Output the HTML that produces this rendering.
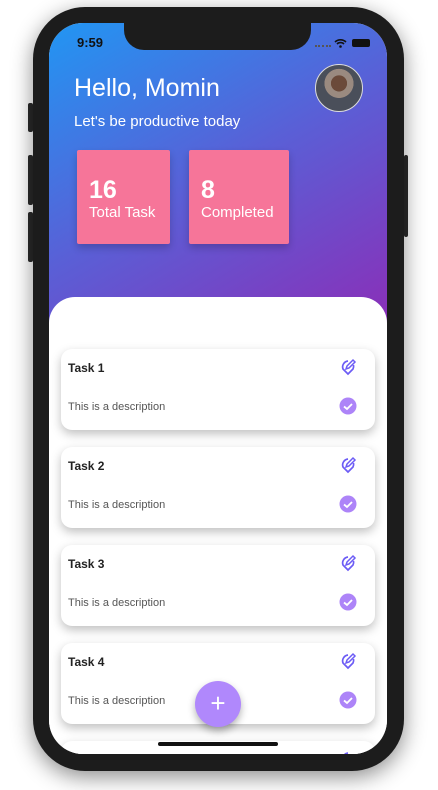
<!DOCTYPE html>
<html><head><meta charset="utf-8"><style>
*{margin:0;padding:0;box-sizing:border-box}
body{width:438px;height:790px;background:#fff;position:relative;overflow:hidden;font-family:"Liberation Sans",sans-serif}
.abs{position:absolute}
.phone{left:33px;top:7px;width:371px;height:764px;background:#1c1c1c;border-radius:52px;box-shadow:0 6px 22px rgba(0,0,0,.45)}
.btn{background:#2a2a2a;border-radius:2px}
.screen{left:49px;top:23px;width:338px;height:731px;border-radius:34px;overflow:hidden;background:#fff}
.grad{left:0;top:0;width:338px;height:300px;background:linear-gradient(150deg,#2196f3 0%,#5a5fd6 50%,#8a2fb8 100%)}
.notch{left:75px;top:0;width:187px;height:27px;background:#1c1c1c;border-radius:0 0 20px 20px}
.sheet{left:0;top:274px;width:338px;height:470px;background:#fff;border-radius:26px 26px 0 0}
.stat{background:#f67599;box-shadow:0 4px 8px rgba(0,0,0,.2);border-radius:2px;color:#fff}
.stat b{position:absolute;left:12px;top:26px;font-size:25px;font-weight:bold}
.stat span{position:absolute;left:12px;top:54px;font-size:15px}
.card{left:12px;width:314px;height:81px;background:#fff;border-radius:11px;box-shadow:0 4px 10px rgba(0,0,0,.25)}
.card .t{position:absolute;left:7px;top:12px;font-size:12px;font-weight:bold;color:#222}
.card .d{position:absolute;left:7px;top:52px;font-size:11px;color:#555}
.card svg{position:absolute}
</style></head><body>
<div class="abs btn" style="left:28px;top:103px;width:5px;height:29px"></div>
<div class="abs btn" style="left:28px;top:155px;width:5px;height:50px"></div>
<div class="abs btn" style="left:28px;top:212px;width:5px;height:50px"></div>
<div class="abs btn" style="left:404px;top:155px;width:4px;height:82px"></div>
<div class="abs phone"></div>
<div class="abs screen">
  <div class="abs grad"></div>
  <div class="abs notch"></div>
  <div class="abs" style="left:28px;top:12px;font-size:13px;font-weight:bold;color:#111">9:59</div>
  <div class="abs" style="left:266px;top:22px;width:16px;height:2px;border-top:2px dotted #555"></div>
  <svg class="abs" style="left:285px;top:15px" width="13" height="10" viewBox="0 0 13 10"><path d="M1 4a8 8 0 0 1 11 0M3 6a5 5 0 0 1 7 0" stroke="#111" stroke-width="1.6" fill="none"/><circle cx="6.5" cy="8.5" r="1.3" fill="#111"/></svg>
  <div class="abs" style="left:303px;top:16px;width:18px;height:8px;background:#111;border-radius:2px"></div>
  <div class="abs" style="left:25px;top:51px;font-size:25px;color:#fff">Hello, Momin</div>
  <div class="abs" style="left:25px;top:90px;font-size:15px;color:#fff">Let's be productive today</div>
  <div class="abs" style="left:266px;top:41px;width:48px;height:48px;border-radius:50%;background:radial-gradient(circle at 50% 40%,#6b4a3a 0 22%,#9a8a80 23% 40%,#4a4f5a 41%);border:1px solid #ddd"></div>
  <div class="abs stat" style="left:28px;top:127px;width:93px;height:94px"><b>16</b><span>Total Task</span></div>
  <div class="abs stat" style="left:140px;top:127px;width:100px;height:94px"><b>8</b><span>Completed</span></div>
  <div class="abs sheet"></div>
  <div id="cards"></div>
  <div class="abs card" style="top:326px"><div class="t">Task 1</div><div class="d">This is a description</div>
  <svg style="left:278px;top:9px" width="18" height="18" viewBox="0 0 18 18"><path d="M9 3a6 6 0 0 0-5 8l5 5 5-5a6 6 0 0 0 .5-4" stroke="#6c5cf5" stroke-width="1.7" fill="none"/><path d="M7 11l1-3 6-6 2 2-6 6z" stroke="#6c5cf5" stroke-width="1.5" fill="none"/></svg>
  <svg style="left:278px;top:48px" width="18" height="18"><circle cx="9" cy="9" r="8.5" fill="#ad84f8"/><path d="M5 9.5l3 2.5 5-5" stroke="#fff" stroke-width="1.8" fill="none"/></svg></div>
  <div class="abs card" style="top:424px"><div class="t">Task 2</div><div class="d">This is a description</div>
  <svg style="left:278px;top:9px" width="18" height="18" viewBox="0 0 18 18"><path d="M9 3a6 6 0 0 0-5 8l5 5 5-5a6 6 0 0 0 .5-4" stroke="#6c5cf5" stroke-width="1.7" fill="none"/><path d="M7 11l1-3 6-6 2 2-6 6z" stroke="#6c5cf5" stroke-width="1.5" fill="none"/></svg>
  <svg style="left:278px;top:48px" width="18" height="18"><circle cx="9" cy="9" r="8.5" fill="#ad84f8"/><path d="M5 9.5l3 2.5 5-5" stroke="#fff" stroke-width="1.8" fill="none"/></svg></div>
  <div class="abs card" style="top:522px"><div class="t">Task 3</div><div class="d">This is a description</div>
  <svg style="left:278px;top:9px" width="18" height="18" viewBox="0 0 18 18"><path d="M9 3a6 6 0 0 0-5 8l5 5 5-5a6 6 0 0 0 .5-4" stroke="#6c5cf5" stroke-width="1.7" fill="none"/><path d="M7 11l1-3 6-6 2 2-6 6z" stroke="#6c5cf5" stroke-width="1.5" fill="none"/></svg>
  <svg style="left:278px;top:48px" width="18" height="18"><circle cx="9" cy="9" r="8.5" fill="#ad84f8"/><path d="M5 9.5l3 2.5 5-5" stroke="#fff" stroke-width="1.8" fill="none"/></svg></div>
  <div class="abs card" style="top:620px"><div class="t">Task 4</div><div class="d">This is a description</div>
  <svg style="left:278px;top:9px" width="18" height="18" viewBox="0 0 18 18"><path d="M9 3a6 6 0 0 0-5 8l5 5 5-5a6 6 0 0 0 .5-4" stroke="#6c5cf5" stroke-width="1.7" fill="none"/><path d="M7 11l1-3 6-6 2 2-6 6z" stroke="#6c5cf5" stroke-width="1.5" fill="none"/></svg>
  <svg style="left:278px;top:48px" width="18" height="18"><circle cx="9" cy="9" r="8.5" fill="#ad84f8"/><path d="M5 9.5l3 2.5 5-5" stroke="#fff" stroke-width="1.8" fill="none"/></svg></div>
  <div class="abs card" style="top:718px"><svg style="left:278px;top:9px" width="18" height="18" viewBox="0 0 18 18"><path d="M9 3a6 6 0 0 0-5 8l5 5 5-5a6 6 0 0 0 .5-4" stroke="#6c5cf5" stroke-width="1.7" fill="none"/></svg></div>
  <div class="abs" style="left:146px;top:658px;width:46px;height:46px;border-radius:50%;background:#b088fc;box-shadow:0 4px 8px rgba(0,0,0,.3);color:#fff;font-size:26px;text-align:center;line-height:44px">+</div>
  <div class="abs" style="left:109px;top:719px;width:120px;height:4px;border-radius:2px;background:#111"></div>
</div>
</body></html>
